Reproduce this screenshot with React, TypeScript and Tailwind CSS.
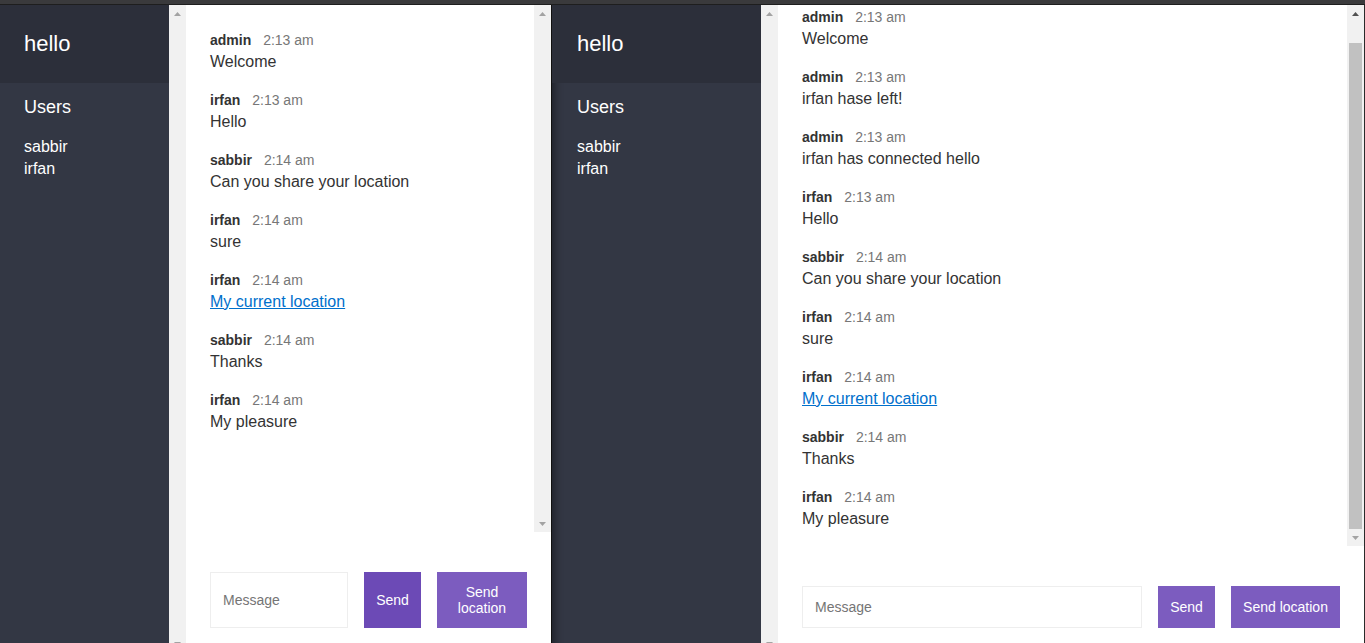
type Msg = { name: string; time: string; text: string; link?: boolean };

const leftMessages: Msg[] = [
  { name: 'admin', time: '2:13 am', text: 'Welcome' },
  { name: 'irfan', time: '2:13 am', text: 'Hello' },
  { name: 'sabbir', time: '2:14 am', text: 'Can you share your location' },
  { name: 'irfan', time: '2:14 am', text: 'sure' },
  { name: 'irfan', time: '2:14 am', text: 'My current location', link: true },
  { name: 'sabbir', time: '2:14 am', text: 'Thanks' },
  { name: 'irfan', time: '2:14 am', text: 'My pleasure' },
];

const rightMessages: Msg[] = [
  { name: 'admin', time: '2:13 am', text: 'Welcome' },
  { name: 'admin', time: '2:13 am', text: 'irfan hase left!' },
  { name: 'admin', time: '2:13 am', text: 'irfan has connected hello' },
  ...leftMessages.slice(1),
];

const users = ['sabbir', 'irfan'];

function Arrow({ up, dark }: { up?: boolean; dark?: boolean }) {
  return (
    <svg width="7" height="4" viewBox="0 0 7 4">
      <polygon
        points={up ? '3.5,0 7,4 0,4' : '0,0 7,0 3.5,4'}
        fill={dark ? '#505050' : '#a3a3a3'}
      />
    </svg>
  );
}

function ScrollTrack({ thumb, upDark }: { thumb?: boolean; upDark?: boolean }) {
  return (
    <div className="w-[17px] shrink-0 bg-[#f1f1f1] flex flex-col">
      <div className="h-[17px] flex items-center justify-center">
        <Arrow up dark={upDark} />
      </div>
      <div className="flex-1 flex flex-col pt-[21px]">
        {thumb && <div className="flex-1 bg-[#c1c1c1] ml-[2px] mr-[2px]" />}
      </div>
      <div className="h-[17px] flex items-center justify-center">
        <Arrow />
      </div>
    </div>
  );
}

function Sidebar({ width, pad, shadow }: { width: string; pad: string; shadow?: boolean }) {
  return (
    <aside
      className={`${width} shrink-0 bg-[#333744] text-white flex flex-col ${
        shadow ? 'shadow-[inset_12px_0_10px_-10px_rgba(0,0,0,0.45)]' : ''
      }`}
    >
      <h2 className={`bg-[#2c2f3a] ${pad} py-6 text-[22px] leading-[30px] font-normal`}>hello</h2>
      <h3 className={`${pad} pt-[13px] mb-1 text-[18px] leading-[22px] font-medium`}>Users</h3>
      <ul className={`${pad} pt-[14px] text-base leading-[22px]`}>
        {users.map((u) => (
          <li key={u}>{u}</li>
        ))}
      </ul>
    </aside>
  );
}

function Message({ m }: { m: Msg }) {
  return (
    <div className="mb-4">
      <p className="text-[14px] leading-[20px]">
        <span className="font-bold text-[#333333] mr-2">{m.name}</span>{' '}
        <span className="text-[#777777]">{m.time}</span>
      </p>
      <p className="text-base leading-[24px] text-[#333333]">
        {m.link ? (
          <a href="#" className="text-[#0070cc] underline">
            {m.text}
          </a>
        ) : (
          m.text
        )}
      </p>
    </div>
  );
}

function Compose({ narrow }: { narrow?: boolean }) {
  return (
    <div className={`shrink-0 mt-4 p-6 flex gap-4 ${narrow ? 'h-[104px]' : 'h-[90px]'}`}>
      <input
        placeholder="Message"
        className="flex-1 min-w-0 border border-[#eeeeee] px-3 text-[14px] text-[#333] placeholder:text-[#757575] outline-none"
      />
      <button
        className={`w-[57px] shrink-0 text-white text-[14px] ${
          narrow ? 'bg-[#6c4ab6] leading-4' : 'bg-[#7c5cbf]'
        }`}
      >
        Send
      </button>
      <button
        className={`shrink-0 bg-[#7c5cbf] text-white text-[14px] px-3 ${
          narrow ? 'w-[90px] leading-4' : 'w-[109px]'
        }`}
      >
        Send location
      </button>
    </div>
  );
}

function ChatWindow({ messages, narrow }: { messages: Msg[]; narrow?: boolean }) {
  return (
    <div className="flex h-[647px]">
      <Sidebar
        width={narrow ? 'w-[169px]' : 'w-[209px]'}
        pad={narrow ? 'px-6' : 'px-[25px]'}
        shadow={!narrow}
      />
      <ScrollTrack />
      <main className="flex-1 min-w-0 bg-white flex flex-col">
        <div className="flex-1 min-h-0 flex">
          <div className={`flex-1 min-w-0 overflow-hidden px-6 ${narrow ? 'pt-[25px]' : 'pt-[2px]'}`}>
            {messages.map((m, i) => (
              <Message key={i} m={m} />
            ))}
          </div>
          <ScrollTrack thumb={!narrow} upDark={!narrow} />
        </div>
        <Compose narrow={narrow} />
      </main>
    </div>
  );
}

export default function App() {
  return (
    <div className="h-[643px] w-[1365px] overflow-hidden bg-white font-['Liberation_Sans',Arial,sans-serif]">
      <div className="h-[4px] bg-[#3a3a3c]" />
      <div className="h-[1px] bg-[#1e1e1e]" />
      <div className="flex">
        <div className="w-[551px] shrink-0">
          <ChatWindow messages={leftMessages} narrow />
        </div>
        <div className="w-[1px] bg-[#111111] shrink-0" />
        <div className="flex-1 min-w-0">
          <ChatWindow messages={rightMessages} />
        </div>
        <div className="w-[1px] bg-[#2a2a2a] shrink-0" />
      </div>
    </div>
  );
}
